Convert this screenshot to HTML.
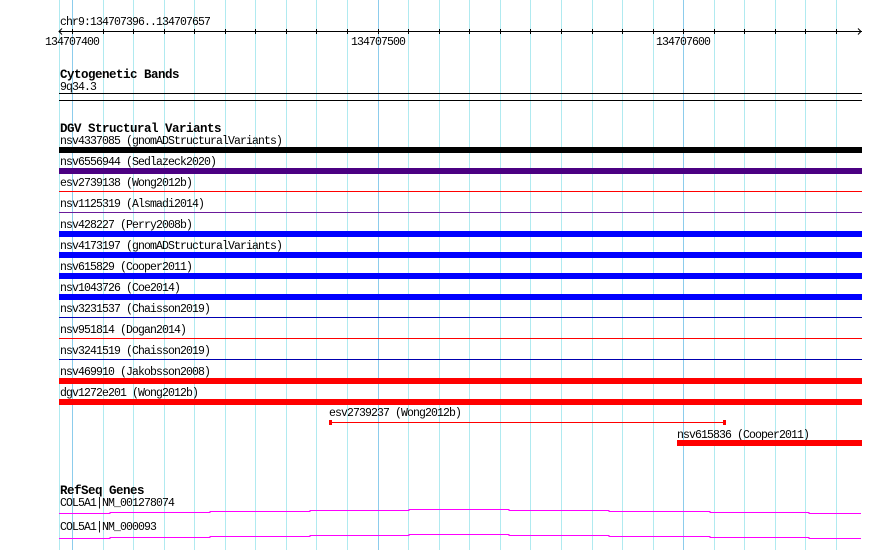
<!DOCTYPE html><html><head><style>body{margin:0;background:#fff}svg{display:block}text{font-family:"Liberation Mono",monospace;font-size:11.5px;letter-spacing:-0.9px;fill:#000}.b{font-weight:bold;font-size:12.5px;letter-spacing:-0.5px}</style></head><body>
<svg width="890" height="550" xmlns="http://www.w3.org/2000/svg" shape-rendering="crispEdges">
<g id="grid" stroke="#b0eaf0" stroke-width="1">
<line x1="59.5" y1="0" x2="59.5" y2="550"/>
<line x1="103.5" y1="0" x2="103.5" y2="550"/><line x1="133.5" y1="0" x2="133.5" y2="550"/><line x1="164.5" y1="0" x2="164.5" y2="550"/><line x1="194.5" y1="0" x2="194.5" y2="550"/><line x1="225.5" y1="0" x2="225.5" y2="550"/><line x1="255.5" y1="0" x2="255.5" y2="550"/><line x1="286.5" y1="0" x2="286.5" y2="550"/><line x1="316.5" y1="0" x2="316.5" y2="550"/><line x1="347.5" y1="0" x2="347.5" y2="550"/>
<line x1="408.5" y1="0" x2="408.5" y2="550"/><line x1="439.5" y1="0" x2="439.5" y2="550"/><line x1="469.5" y1="0" x2="469.5" y2="550"/><line x1="500.5" y1="0" x2="500.5" y2="550"/><line x1="530.5" y1="0" x2="530.5" y2="550"/><line x1="561.5" y1="0" x2="561.5" y2="550"/><line x1="592.5" y1="0" x2="592.5" y2="550"/><line x1="622.5" y1="0" x2="622.5" y2="550"/><line x1="653.5" y1="0" x2="653.5" y2="550"/>
<line x1="714.5" y1="0" x2="714.5" y2="550"/><line x1="744.5" y1="0" x2="744.5" y2="550"/><line x1="775.5" y1="0" x2="775.5" y2="550"/><line x1="805.5" y1="0" x2="805.5" y2="550"/><line x1="836.5" y1="0" x2="836.5" y2="550"/>
</g>
<g stroke="#8cccec"><line x1="72.5" y1="0" x2="72.5" y2="550"/><line x1="378.5" y1="0" x2="378.5" y2="550"/><line x1="683.5" y1="0" x2="683.5" y2="550"/></g>
<text x="60" y="25">chr9:134707396..134707657</text>
<g stroke="#000" fill="none">
<line x1="59" y1="31.5" x2="862" y2="31.5"/>
<path d="M62 28.5 L59 31.5 L62 34.5 M858 28.5 L861 31.5 L858 34.5" shape-rendering="auto"/>
<path d="M72.5 29v5M103.5 29v5M133.5 29v5M164.5 29v5M194.5 29v5M225.5 29v5M255.5 29v5M286.5 29v5M316.5 29v5M347.5 29v5M378.5 29v5M408.5 29v5M439.5 29v5M469.5 29v5M500.5 29v5M530.5 29v5M561.5 29v5M592.5 29v5M622.5 29v5M653.5 29v5M683.5 29v5M714.5 29v5M744.5 29v5M775.5 29v5M805.5 29v5M836.5 29v5"/>
</g>
<text x="45" y="45">134707400</text><text x="351" y="45">134707500</text><text x="656" y="45">134707600</text>
<text class="b" x="60" y="78">Cytogenetic Bands</text>
<text x="60" y="90">9q34.3</text>
<rect x="59" y="93" width="803" height="1" fill="#000"/><rect x="59" y="100" width="803" height="1" fill="#000"/>
<text class="b" x="60" y="132">DGV Structural Variants</text>
<text x="60" y="144">nsv4337085 (gnomADStructuralVariants)</text><rect x="59" y="147" width="803" height="6" fill="#000"/>
<text x="60" y="165">nsv6556944 (Sedlazeck2020)</text><rect x="59" y="168" width="803" height="6" fill="#4b0082"/>
<text x="60" y="186">esv2739138 (Wong2012b)</text><rect x="59" y="191" width="803" height="1" fill="#f00"/>
<text x="60" y="207">nsv1125319 (Alsmadi2014)</text><rect x="59" y="212" width="803" height="1" fill="#6a1a9a"/>
<text x="60" y="228">nsv428227 (Perry2008b)</text><rect x="59" y="231" width="803" height="6" fill="#00f"/>
<text x="60" y="249">nsv4173197 (gnomADStructuralVariants)</text><rect x="59" y="252" width="803" height="6" fill="#00f"/>
<text x="60" y="270">nsv615829 (Cooper2011)</text><rect x="59" y="273" width="803" height="6" fill="#00f"/>
<text x="60" y="291">nsv1043726 (Coe2014)</text><rect x="59" y="294" width="803" height="6" fill="#00f"/>
<text x="60" y="312">nsv3231537 (Chaisson2019)</text><rect x="59" y="317" width="803" height="1" fill="#0000b0"/>
<text x="60" y="333">nsv951814 (Dogan2014)</text><rect x="59" y="338" width="803" height="1" fill="#f00"/>
<text x="60" y="354">nsv3241519 (Chaisson2019)</text><rect x="59" y="359" width="803" height="1" fill="#0000b0"/>
<text x="60" y="375">nsv469910 (Jakobsson2008)</text><rect x="59" y="378" width="803" height="6" fill="#f00"/>
<text x="60" y="396">dgv1272e201 (Wong2012b)</text><rect x="59" y="399" width="803" height="6" fill="#f00"/>
<text x="329" y="416">esv2739237 (Wong2012b)</text>
<rect x="329" y="422" width="397" height="1" fill="#f00"/><rect x="329" y="420" width="3" height="5" fill="#f00"/><rect x="723" y="420" width="3" height="5" fill="#f00"/>
<text x="677" y="438">nsv615836 (Cooper2011)</text><rect x="677" y="440" width="185" height="6" fill="#f00"/>
<text class="b" x="60" y="494">RefSeq Genes</text>
<text x="60" y="506">COL5A1|NM_001278074</text>
<path d="M59 513.5H110V512.5H210V511.5H310V510.5H409V509.5H509V510.5H609V511.5H710V512.5H809V513.5H861" stroke="#f0f" fill="none"/>
<text x="60" y="530">COL5A1|NM_000093</text>
<path d="M59 538.5H110V537.5H210V536.5H310V535.5H409V534.5H509V535.5H609V536.5H710V537.5H809V538.5H861" stroke="#f0f" fill="none"/>
</svg></body></html>
